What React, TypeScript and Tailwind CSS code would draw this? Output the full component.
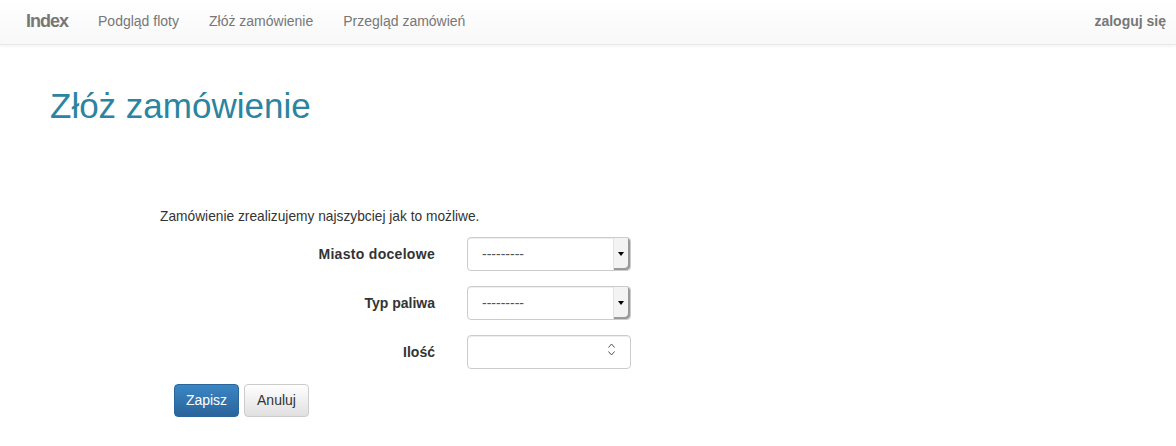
import React from "react";

function FakeSelect() {
  return (
    <div className="relative flex h-[34px] w-[164px] items-center rounded border border-[#ccc] bg-white shadow-[inset_0_1px_1px_rgba(0,0,0,0.075)]">
      <span className="pl-[14px] text-[14px] text-[#555]">---------</span>
      <div className="absolute right-0 top-0 flex h-[32px] w-[17px] items-center justify-center rounded-r border-l border-[#e3e3e3] bg-[#f3f3f3] shadow-[inset_-2px_-2px_0_#9a9a9a]">
        <span className="mr-[2px] block h-0 w-0 border-x-[3px] border-t-[4px] border-x-transparent border-t-black" />
      </div>
    </div>
  );
}

function NumberInput() {
  return (
    <div className="relative flex h-[34px] w-[164px] items-center rounded border border-[#ccc] bg-white shadow-[inset_0_1px_1px_rgba(0,0,0,0.075)]">
      <div className="absolute right-[15px] top-[7px] flex flex-col items-center gap-[3px]">
        <svg width="7" height="5" viewBox="0 0 7 5" fill="none" stroke="#555" strokeWidth="1">
          <path d="M0.5 4.5 L3.5 1 L6.5 4.5" />
        </svg>
        <svg width="7" height="5" viewBox="0 0 7 5" fill="none" stroke="#555" strokeWidth="1">
          <path d="M0.5 0.5 L3.5 4 L6.5 0.5" />
        </svg>
      </div>
    </div>
  );
}

export default function App() {
  return (
    <div className="min-h-[446px] bg-white font-['Liberation_Sans',Arial,sans-serif] text-[14px] text-[#333]">
      <nav className="flex h-[45px] items-center justify-between border-b border-[#e7e7e7] bg-gradient-to-b from-white to-[#f8f8f8] pb-[2px] shadow-[0_1px_4px_rgba(0,0,0,0.06)]">
        <div className="flex items-center">
          <span className="ml-[26px] text-[18px] font-bold tracking-[-1px] text-[#777]">Index</span>
          <a href="#" className="ml-[30px] text-[#777]">Podgląd floty</a>
          <a href="#" className="ml-[30px] text-[#777]">Złóż zamówienie</a>
          <a href="#" className="ml-[30px] text-[#777]">Przegląd zamówień</a>
        </div>
        <a href="#" className="mr-[10px] font-bold text-[#777]">zaloguj się</a>
      </nav>

      <main className="pl-[50px]">
        <h1 className="mt-[41px] text-[35px] leading-[40px] text-[#2b84a0]">Złóż zamówienie</h1>

        <form className="ml-[110px] mt-[81px]">
          <p className="text-[13.75px] leading-[20px] text-[#333]">
            Zamówienie zrealizujemy najszybciej jak to możliwe.
          </p>
          <div className="mt-[10px] grid grid-cols-[275px_164px] items-center gap-x-[32px] gap-y-[15px]">
            <label className="text-right font-bold tracking-[0.3px]">Miasto docelowe</label>
            <FakeSelect />
            <label className="text-right font-bold">Typ paliwa</label>
            <FakeSelect />
            <label className="text-right font-bold">Ilość</label>
            <NumberInput />
          </div>
          <div className="ml-[14px] mt-[15px] flex gap-[5px]">
            <button
              type="button"
              className="h-[33px] w-[65px] rounded border border-[#2b669a] bg-gradient-to-b from-[#3a86c5] to-[#2a649a] text-white"
            >
              Zapisz
            </button>
            <button
              type="button"
              className="h-[33px] w-[65px] rounded border border-[#ccc] bg-gradient-to-b from-white to-[#e0e0e0] text-[#333]"
            >
              Anuluj
            </button>
          </div>
        </form>
      </main>
    </div>
  );
}
